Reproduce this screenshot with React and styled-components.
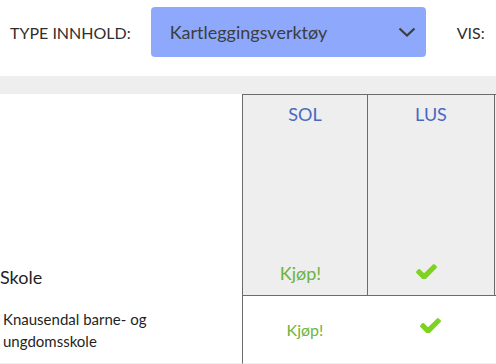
import React from "react";
import styled, { createGlobalStyle } from "styled-components";

const Global = createGlobalStyle`
  html, body { margin: 0; padding: 0; background: #fff; }
  body { font-family: Lato, "Open Sans", sans-serif; overflow: hidden; }
`;

const Page = styled.div`
  width: 496px;
  height: 364px;
  overflow: hidden;
  background: #fff;
`;

const Toolbar = styled.div`
  display: flex;
  align-items: center;
  height: 50px;
  padding: 7px 0 19px 10px;
`;

const Label = styled.span`
  font-size: 16px;
  color: #2f2f2f;
  margin-right: ${(p) => p.$gap || 0}px;
  white-space: nowrap;
`;

const Select = styled.div`
  display: flex;
  align-items: center;
  justify-content: space-between;
  width: 275px;
  height: 50px;
  box-sizing: border-box;
  padding: 0 10px 0 19px;
  background: #8ea9fb;
  border-radius: 4px;
  color: #3d3d3d;
  font-size: 18px;
  margin-right: 31px;
  flex-shrink: 0;
`;

const Band = styled.div`
  height: 18px;
  background: #eeeeee;
`;

const Grid = styled.div`
  display: grid;
  grid-template-columns: 242px 125px 127px 20px;
  width: 514px;
`;

const CornerCell = styled.div`
  display: flex;
  align-items: flex-end;
  height: 202px;
  box-sizing: border-box;
  padding-bottom: 8px;
  font-size: 18px;
  color: #1f1f1f;
`;

const HeadCell = styled.div`
  display: flex;
  flex-direction: column;
  justify-content: space-between;
  align-items: center;
  height: 202px;
  box-sizing: border-box;
  background: #eeeeee;
  border: 1px solid #6b6b6b;
  border-right: none;
  padding: 8px 0 11px;
`;

const ProductName = styled.span`
  font-size: 18px;
  color: #4769c2;
`;

const Status = styled.div`
  display: flex;
  align-items: center;
  justify-content: center;
  height: 22px;
  padding-right: ${(p) => p.$shift || 0}px;
`;

const Buy = styled.span`
  font-size: ${(p) => p.$size}px;
  color: #6db33f;
`;

const CheckSvg = styled.svg`
  width: 21px;
  height: 15px;
  margin-bottom: ${(p) => p.$lift || 0}px;
  fill: #7ed321;
  display: block;
`;

const Check = ({ lift }) => (
  <CheckSvg $lift={lift} viewBox="121 342 1550 1084">
    <path d="M1671 566q0 40-28 68l-724 724-136 136q-28 28-68 28t-68-28l-136-136-362-362q-28-28-28-68t28-68l136-136q28-28 68-28t68 28l294 295 656-657q28-28 68-28t68 28l136 136q28 28 28 68z" />
  </CheckSvg>
);

const SchoolCell = styled.div`
  display: flex;
  align-items: center;
  height: 67px;
  padding-left: 3px;
  font-size: 15px;
  line-height: 22px;
  color: #1f1f1f;
  border-bottom: 1px solid #eeeeee;
`;

const BodyCell = styled.div`
  display: flex;
  align-items: center;
  justify-content: center;
  height: 67px;
  border-bottom: 1px solid #eeeeee;
  border-left: ${(p) => (p.$lined ? "1px solid #6b6b6b" : "none")};
`;

const Chevron = () => (
  <svg width="18" height="10" viewBox="0 0 18 10">
    <polyline points="1.5,1.5 9,8.5 16.5,1.5" fill="none" stroke="#3d3d3d" strokeWidth="2.2" />
  </svg>
);

export default function App() {
  return (
    <Page>
      <Global />
      <Toolbar>
        <Label $gap={20}>TYPE INNHOLD:</Label>
        <Select>
          <span>Kartleggingsverktøy</span>
          <Chevron />
        </Select>
        <Label>VIS:</Label>
      </Toolbar>
      <Band />
      <Grid>
        <CornerCell>Skole</CornerCell>
        <HeadCell>
          <ProductName>SOL</ProductName>
          <Status $shift={9}>
            <Buy $size={18}>Kjøp!</Buy>
          </Status>
        </HeadCell>
        <HeadCell>
          <ProductName>LUS</ProductName>
          <Status $shift={9}>
            <Check lift={4} />
          </Status>
        </HeadCell>
        <HeadCell />
        <SchoolCell>
          <span>
            Knausendal barne- og
            <br />
            ungdomsskole
          </span>
        </SchoolCell>
        <BodyCell $lined>
          <Buy $size={16}>Kjøp!</Buy>
        </BodyCell>
        <BodyCell>
          <Check lift={9} />
        </BodyCell>
        <BodyCell />
      </Grid>
    </Page>
  );
}
